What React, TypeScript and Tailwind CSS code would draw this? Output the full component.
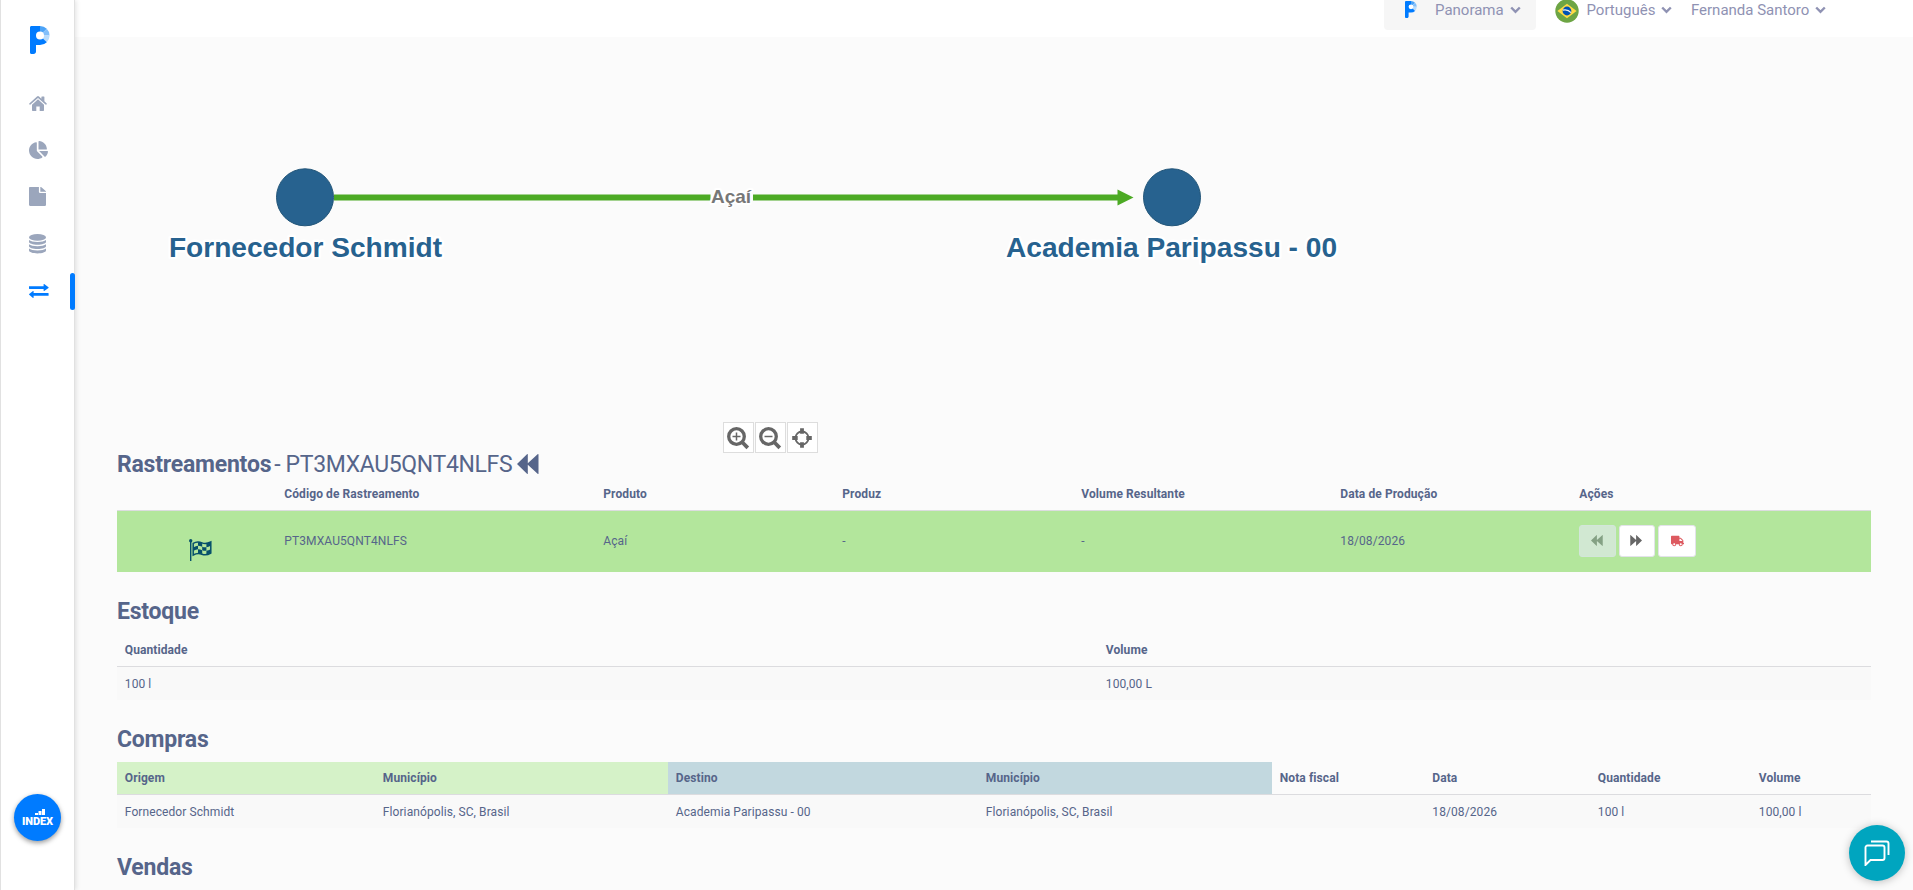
import type { ReactNode } from "react";
import { FaChartPie, FaFile, FaTruck } from "react-icons/fa";

const Logo = ({ className }: { className?: string }) => (
  <svg viewBox="0 0 20 28" className={className}>
    <path d="M0 1.5C0 .6.6 0 1.5 0H10v19H6v6.5C6 27 5 28 3.500 28H1.500C.6 28 0 27.400 0 26.500Z" fill="#007bff" />
    <path d="M10 9.500V0a9.600 9.600 0 0 1 6.800 2.800Z" fill="#4ba3f7" />
    <path d="M10 9.500L16.800 2.800A9.600 9.600 0 0 1 19.600 9.500Z" fill="#82bffa" />
    <path d="M10 9.500H19.600A9.600 9.600 0 0 1 16.800 16.300Z" fill="#b9dcfc" />
    <path d="M10 9.500L16.800 16.300A9.600 9.600 0 0 1 10 19.100Z" fill="#007bff" />
    <circle cx="10" cy="9.500" r="4" fill="#fff" />
  </svg>
);

const HomeIcon = () => (
  <svg viewBox="0 0 18 14" className="h-[15px] w-[18px]" fill="currentColor" preserveAspectRatio="none">
    <path d="M9 3.100L3 8.100V13.300c0 .4.3.7.7.7H7.300V9.900h3.400V14h3.600c.4 0 .7-.3.7-.7V8.100Z" />
    <path d="M17.700 6.900L15.400 5V.9c0-.3-.2-.5-.5-.5h-2c-.3 0-.5.2-.5.5v1.600L10 .5a1.600 1.600 0 0 0-2 0L.3 6.900c-.2.200-.2.400-.1.600l.4.500c.2.200.4.200.6.100L9 1.800l7.800 6.300c.2.100.4.100.600-.1l.4-.5c.1-.2.1-.4-.1-.6Z" />
  </svg>
);

const DatabaseIcon = () => (
  <svg viewBox="0 0 17 20" className="h-5 w-[17px]" fill="currentColor">
    <ellipse cx="8.500" cy="3.400" rx="8.500" ry="3.400" />
    <path d="M0 6c1.500 1.300 4.600 2 8.500 2s7-.7 8.500-2v2c0 1.400-3.800 2.700-8.500 2.700S0 9.400 0 8Z" />
    <path d="M0 10.300c1.500 1.300 4.600 2 8.500 2s7-.7 8.500-2v2c0 1.400-3.800 2.700-8.500 2.700S0 13.700 0 12.300Z" />
    <path d="M0 14.600c1.500 1.300 4.600 2 8.500 2s7-.7 8.500-2v2c0 1.600-3.800 2.900-8.500 2.900S0 18.200 0 16.600Z" />
  </svg>
);

const ExchangeIcon = () => (
  <svg viewBox="0 0 20 14" className="h-3.5 w-5" fill="currentColor">
    <path d="M.4 2.200H14.600V.4c0-.4.300-.5.600-.3l4.300 3.100c.2.200.2.500 0 .7L15.200 6.900c-.3.200-.6.100-.6-.3V4.900H.4C.1 4.900 0 4.700 0 4.500V2.600c0-.2.100-.4.400-.4Z" />
    <path d="M19.200 9.100H4.600V7.400c0-.4-.3-.5-.6-.3L.2 10.100c-.2.200-.2.500 0 .7L4 13.900c.3.200.6.100.6-.3v-1.800h14.600c.2 0 .4-.2.400-.4V9.500c0-.2-.2-.4-.4-.4Z" />
  </svg>
);

const Backward = ({ className }: { className?: string }) => (
  <svg viewBox="0 0 22 20" className={className} fill="currentColor">
    <path d="M0 10L10 .3c.4-.4.800-.3.800.3v8.700L20.600.3c.400-.4.900-.3.900.3v18.800c0 .6-.5.700-.9.300L10.800 10.700v8.700c0 .6-.4.700-.8.300Z" />
  </svg>
);

const FlagIcon = () => (
  <svg viewBox="0 0 23 22" className="h-[22px] w-[23px]" fill="#06506b">
    <circle cx="1.700" cy="1.700" r="1.700" />
    <path d="M1 2h1.400v20H1Z" />
    <path
      d="M4.200 4.400C7 2.600 9.800 2.400 13 3.900c3 1.400 5.600.7 8.800-.9V14c-3 1.900-5.600 2.600-8.800 1.200-3.200-1.400-5.800-1-8.800.8Z"
      fill="none"
      stroke="#06506b"
      strokeWidth="1.500"
    />
    <path d="M9 3.200c1.500 0 2.800.3 4.200 1v3.500c-1.400-.7-2.800-1-4.200-1Z" />
    <path d="M17.400 4.600c1.500-.3 2.800-.8 4.200-1.500v3.600c-1.400.7-2.700 1.200-4.200 1.500Z" />
    <path d="M4.600 8.200C6.200 7.300 7.500 6.800 9 6.700v3.500c-1.500.1-2.800.6-4.400 1.500Z" />
    <path d="M13.200 7.700c1.400.6 2.700.7 4.200.5v3.500c-1.500.3-2.800.1-4.200-.5Z" />
    <path d="M9 10.200c1.500 0 2.800.3 4.200 1v3.900c-1.400-.7-2.700-1-4.200-1Z" />
    <path d="M17.400 11.700c1.500-.3 2.800-.8 4.200-1.500v3.600c-1.400.8-2.700 1.400-4.200 1.600Z" />
  </svg>
);

const Chevron = () => (
  <svg viewBox="0 0 11 8" className="ml-1.5 h-2 w-[11px]" fill="none" stroke="currentColor" strokeWidth="2.400">
    <path d="M1.200 1.500L5.500 5.800L9.800 1.500" />
  </svg>
);

const BrazilFlag = () => (
  <svg viewBox="0 0 24 24" className="h-6 w-6">
    <circle cx="12" cy="12" r="11.700" fill="#6da544" />
    <path d="M12 4.800L21.600 12L12 19.200L2.400 12Z" fill="#ffda44" />
    <circle cx="12" cy="12" r="4.400" fill="#0052b4" />
    <path d="M7.800 11.200C11 10.400 14 11.400 16 13.700" stroke="#f0f0f0" strokeWidth="1.200" fill="none" />
  </svg>
);

const TrackingGraph = () => (
  <svg viewBox="0 0 1490 413" className="block h-[413px] w-[1490px]" fontFamily="Liberation Sans, Arial, sans-serif" fontWeight="700">
    <g transform="translate(-75 -37)">
      <path d="M334 197.500H710.500M753 197.500H1120" stroke="#4caa24" strokeWidth="6" />
      <path d="M1117.500 189.500L1133.500 197.500L1117.500 205.500Z" fill="#4caa24" />
      <circle cx="305" cy="197.300" r="28.500" fill="#27628f" stroke="#235679" />
      <circle cx="1172" cy="197.300" r="28.500" fill="#27628f" stroke="#235679" />
      <g textAnchor="middle" stroke="#fff" strokeLinejoin="round" paintOrder="stroke">
        <text x="731" y="203" fontSize="19" fill="#777" strokeWidth="4">Açaí</text>
        <text x="305.500" y="257" fontSize="28.100" fill="#27628f" strokeWidth="5">Fornecedor Schmidt</text>
        <text x="1171.500" y="257" fontSize="28.100" fill="#27628f" strokeWidth="5">Academia Paripassu - 00</text>
      </g>
    </g>
  </svg>
);

const NavItem = ({ children, className = "" }: { children: ReactNode; className?: string }) => (
  <a className={`flex h-[46.800px] w-full items-center pl-7 ${className}`}>{children}</a>
);

const ZoomButton = ({ children }: { children: ReactNode }) => (
  <button className="flex h-[31px] w-[31px] items-center justify-center border border-[#ddd] bg-white pr-0.5">
    <svg viewBox="0 0 24 24" className="h-6 w-6 shrink-0" fill="none" stroke="#666" strokeWidth="3.300">{children}</svg>
  </button>
);

const Title = ({ children }: { children: ReactNode }) => (
  <h2 className="mt-[25px] mb-[9px] h-7 text-[23px] leading-[30px] font-bold tracking-[-0.220px]">{children}</h2>
);

type Column = { label: string; width: string; head?: string };

const Head = ({ columns }: { columns: Column[] }) => (
  <thead>
    <tr className="h-[33px]">
      {columns.map((c, i) => (
        <th key={i} className={`border-b border-[#dcdcdf] px-[7.800px] text-left font-bold ${c.width} ${c.head ?? ""}`}>
          {c.label}
        </th>
      ))}
    </tr>
  </thead>
);

const Row = ({ cells }: { cells: string[] }) => (
  <tbody>
    <tr className="h-[33px] bg-[#f9f9f9]">
      {cells.map((c, i) => <td key={i} className="px-[7.800px]">{c}</td>)}
    </tr>
  </tbody>
);

const trackingColumns: Column[] = [
  { label: "", width: "w-[159.500px]" },
  { label: "Código de Rastreamento", width: "w-[319px]" },
  { label: "Produto", width: "w-[239px]" },
  { label: "Produz", width: "w-[239px]" },
  { label: "Volume Resultante", width: "w-[259px]" },
  { label: "Data de Produção", width: "w-[239px]" },
  { label: "Ações", width: "" },
];

const stockColumns: Column[] = [
  { label: "Quantidade", width: "w-[981px]" },
  { label: "Volume", width: "" },
];

const purchaseColumns: Column[] = [
  { label: "Origem", width: "w-[258px]", head: "bg-[#d5f2c8]" },
  { label: "Município", width: "w-[293px]", head: "bg-[#d5f2c8]" },
  { label: "Destino", width: "w-[310px]", head: "bg-[#c2d8df]" },
  { label: "Município", width: "w-[294px]", head: "bg-[#c2d8df]" },
  { label: "Nota fiscal", width: "w-[152.500px]" },
  { label: "Data", width: "w-[165.500px]" },
  { label: "Quantidade", width: "w-[161px]" },
  { label: "Volume", width: "" },
];

const tableClass = "w-full table-fixed border-separate border-spacing-0 text-xs tracking-[0.090px]";

export default function App() {
  return (
    <div className="relative flex h-[890px] w-[1913px] overflow-hidden bg-[#fbfbfb] font-['Roboto',sans-serif] text-[#56658a]">
      <aside className="relative z-10 flex w-[75px] shrink-0 flex-col border-x border-[#e1e1e1] bg-white text-[#9ba6bc] shadow-[1px_0_5px_rgba(0,0,0,0.12)]">
        <Logo className="mt-[26px] ml-[29px] h-7 w-5" />
        <nav className="mt-[26px]">
          <NavItem><HomeIcon /></NavItem>
          <NavItem><FaChartPie className="h-[18px] w-[19px]" /></NavItem>
          <NavItem><FaFile className="h-[19px] w-[17px]" preserveAspectRatio="none" /></NavItem>
          <NavItem><DatabaseIcon /></NavItem>
          <NavItem className="relative text-[#007bff]">
            <ExchangeIcon />
            <span className="absolute top-[6px] -right-px h-[37px] w-[5px] rounded-sm bg-[#007bff]" />
          </NavItem>
        </nav>
        <button className="mt-auto mb-[49px] ml-[13px] flex h-[47px] w-[47px] flex-col items-center rounded-full bg-[#007bff] pt-[15px] text-white shadow-[0_2px_5px_rgba(0,0,0,0.4)]">
          <svg viewBox="0 0 10 6" className="ml-1 h-1.5 w-2.5 shrink-0" fill="currentColor">
            <path d="M0 4h3v2H0ZM3.500 2h3v4h-3ZM7 0h3v6H7Z" />
          </svg>
          <span className="mt-px text-[11px] leading-[11px] font-black tracking-[-0.100px]">INDEX</span>
        </button>
      </aside>

      <div className="min-w-0 flex-1">
        <header className="flex h-[37px] items-start bg-white text-[15px] text-[#8f92b3]">
          <div className="ml-[1309px] flex h-[30px] w-[152px] items-start rounded-b bg-[#f6f6f6]">
            <Logo className="mt-px ml-[21px] h-[17px] w-3" />
            <span className="-mt-px ml-[18px] flex h-[22px] items-center">Panorama<Chevron /></span>
          </div>
          <div className="ml-[18.500px] flex h-[22px] items-center">
            <BrazilFlag />
            <span className="ml-2 flex h-[22px] -translate-y-px items-center">Português<Chevron /></span>
          </div>
          <span className="-mt-px ml-[18.500px] flex h-[22px] items-center">Fernanda Santoro<Chevron /></span>
        </header>

        <main>
          <div className="relative h-[413px]">
            <TrackingGraph />
            <div className="absolute top-[385px] left-[648px] z-10 flex gap-px">
              <ZoomButton>
                <circle cx="10.500" cy="10.500" r="7.800" />
                <path d="M16 16L21.800 21.800" strokeWidth="3.800" />
                <path d="M10.500 6.500v8M6.500 10.500h8" strokeWidth="1.500" />
              </ZoomButton>
              <ZoomButton>
                <circle cx="10.500" cy="10.500" r="7.800" />
                <path d="M16 16L21.800 21.800" strokeWidth="3.800" />
                <path d="M6.500 10.500h8" strokeWidth="1.500" />
              </ZoomButton>
              <ZoomButton>
                <circle cx="12" cy="12" r="6.500" strokeWidth="1.800" />
                <path d="M12 2.200v5.500M12 16.300v5.500M2.200 12h5.500M16.300 12h5.500" strokeWidth="3.800" />
              </ZoomButton>
            </div>
          </div>

          <div className="ml-[42px] w-[1754px]">
            <h2 className="flex h-7 items-center text-[23px] leading-7">
              <b className="mt-0.5 tracking-[-0.220px]">Rastreamentos</b>
              <span className="mt-0.5 ml-[3px] tracking-[-0.350px]">- PT3MXAU5QNT4NLFS</span>
              <Backward className="ml-[5px] h-5 w-[22px]" />
            </h2>
            <table className={tableClass}>
              <Head columns={trackingColumns} />
              <tbody>
                <tr className="h-[61px] bg-[#b3e69c]">
                  <td><div className="mt-[17px] ml-[72px]"><FlagIcon /></div></td>
                  <td className="px-[7.800px] pb-0.5">PT3MXAU5QNT4NLFS</td>
                  <td className="px-[7.800px] pb-0.5">Açaí</td>
                  <td className="px-[7.800px] pb-0.5">-</td>
                  <td className="px-[7.800px] pb-0.5">-</td>
                  <td className="px-[7.800px] pb-0.5">18/08/2026</td>
                  <td className="px-[7px] pb-0.5">
                    <div className="flex gap-[3px]">
                      <button className="flex h-8 w-[37px] items-center justify-center rounded-[3px] border border-[#d3e6da] bg-[#d1e8d2] text-[#84a184]">
                        <Backward className="h-[11px] w-3" />
                      </button>
                      <button className="flex h-8 w-9 items-center justify-center rounded-[3px] border border-[#e3e3ea] bg-white pr-px text-[#666]">
                        <Backward className="h-[11px] w-3 -scale-x-100" />
                      </button>
                      <button className="flex h-8 w-[38px] items-center justify-center rounded-[3px] border border-[#e3e3ea] bg-white text-[#dd5a60]">
                        <FaTruck className="ml-0.5 h-3 w-[13px] shrink-0" />
                      </button>
                    </div>
                  </td>
                </tr>
              </tbody>
            </table>

            <Title>Estoque</Title>
            <table className={tableClass}>
              <Head columns={stockColumns} />
              <Row cells={["100 l", "100,00 L"]} />
            </table>

            <Title>Compras</Title>
            <table className={tableClass}>
              <Head columns={purchaseColumns} />
              <Row
                cells={["Fornecedor Schmidt", "Florianópolis, SC, Brasil", "Academia Paripassu - 00", "Florianópolis, SC, Brasil", "", "18/08/2026", "100 l", "100,00 l"]}
              />
            </table>

            <Title>Vendas</Title>
          </div>
        </main>
      </div>

      {/* Chat launcher */}
      <button className="absolute right-2 bottom-[9px] flex h-14 w-14 items-center justify-center rounded-full bg-[#00a5bf] shadow-[0_1px_8px_rgba(0,0,0,0.25)]">
        <svg viewBox="0 0 26 26" className="h-[26px] w-[26px]" fill="none" stroke="#fff" strokeWidth="1.900">
          <path d="M1.500 25V7.500a2 2 0 0 1 2-2h15a2 2 0 0 1 2 2v10.500a2 2 0 0 1-2 2H6.500Z" />
          <path d="M7 1.500H22.500a2 2 0 0 1 2 2V15" />
        </svg>
      </button>
    </div>
  );
}
